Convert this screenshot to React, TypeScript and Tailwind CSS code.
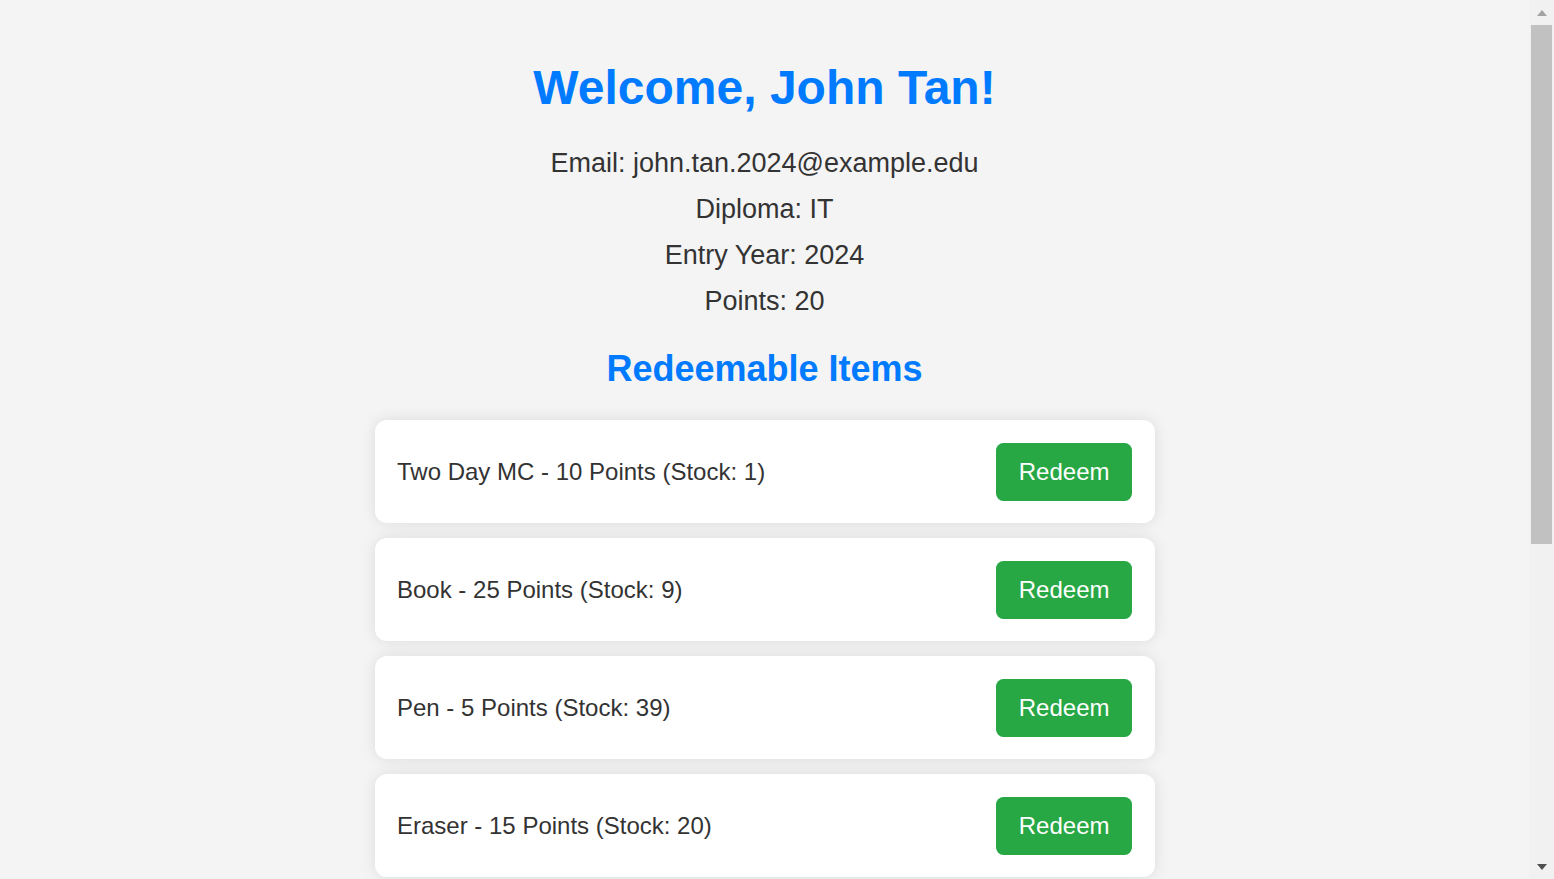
// Student dashboard: profile summary plus the list of items that can be redeemed.

const student = {
  name: "John Tan",
  email: "john.tan.2024@example.edu",
  diploma: "IT",
  entryYear: 2024,
  points: 20,
};

const items = [
  { name: "Two Day MC", cost: 10, stock: 1 },
  { name: "Book", cost: 25, stock: 9 },
  { name: "Pen", cost: 5, stock: 39 },
  { name: "Eraser", cost: 15, stock: 20 },
];

function ScrollBar() {
  return (
    <aside className="sticky top-0 flex h-screen w-[25px] shrink-0 flex-col self-start bg-[#f1f1f1]">
      <div className="flex h-[25px] items-center justify-center pl-[1px]">
        <div className="h-0 w-0 border-x-[5.5px] border-b-[6px] border-x-transparent border-b-[#a3a3a3]" />
      </div>
      <div className="px-[2px]">
        <div className="h-[519px] bg-[#c1c1c1]" />
      </div>
      <div className="flex-1" />
      <div className="flex h-[25px] items-center justify-center pl-[1px]">
        <div className="h-0 w-0 border-x-[5.5px] border-t-[6px] border-x-transparent border-t-[#505050]" />
      </div>
    </aside>
  );
}

export default function App() {
  return (
    <div
      className="flex bg-[#f4f4f4] text-[#333]"
      style={{ fontFamily: '"Liberation Sans", Arial, sans-serif' }}
    >
      <main className="min-h-[1438px] flex-1 pt-[60px]">
        <div className="mx-auto flex w-[780px] flex-col items-center">
          <h1 className="text-[48px] font-bold leading-[56px] text-[#007bff]">
            Welcome, {student.name}!
          </h1>

          {/* Profile lines */}
          <div className="mt-[32px] flex flex-col items-center gap-[15px] text-[27px] leading-[31px]">
            <p>Email: {student.email}</p>
            <p>Diploma: {student.diploma}</p>
            <p>Entry Year: {student.entryYear}</p>
            <p>Points: {student.points}</p>
          </div>

          <h2 className="mt-[31px] text-[36px] font-bold leading-[41px] text-[#007bff]">
            Redeemable Items
          </h2>

          <ul className="mt-[31px] flex w-full flex-col gap-[15px]">
            {items.map((item) => (
              <li
                key={item.name}
                className="flex items-center justify-between rounded-[12px] bg-white p-[22.5px] shadow-[0_0_15px_rgba(0,0,0,0.1)]"
              >
                <span className="text-[24px] leading-[28px]">
                  {item.name} - {item.cost} Points (Stock: {item.stock})
                </span>
                <button className="rounded-[7.5px] bg-[#28a745] px-[22.5px] py-[15px] text-[24px] leading-[28px] text-white">
                  Redeem
                </button>
              </li>
            ))}
          </ul>
        </div>
      </main>
      <ScrollBar />
    </div>
  );
}
